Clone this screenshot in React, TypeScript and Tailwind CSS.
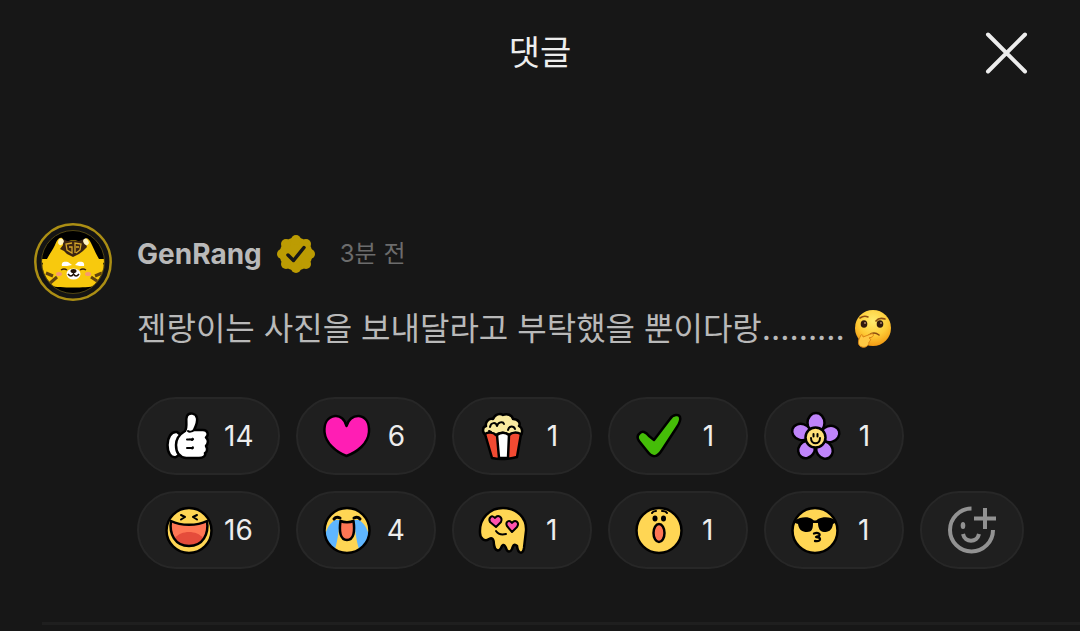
import { useState } from 'react';
import type { ReactNode } from 'react';

interface Reaction {
  id: string;
  label: string;
  count: number;
  icon: ReactNode;
}

const OUTLINE = {
  stroke: '#000',
  strokeWidth: 2.5,
  strokeLinecap: 'round' as const,
  strokeLinejoin: 'round' as const,
};

function Icon({ children }: { children: ReactNode }) {
  return (
    <svg className="w-12 h-12 shrink-0 overflow-visible" viewBox="0 0 48 48" fill="none" aria-hidden="true">
      {children}
    </svg>
  );
}

function ThumbIcon() {
  return (
    <Icon>
      <g fill="#fff" {...OUTLINE}>
        <path d="M13 20C7 19 3.500 26 3.500 33C3.500 41 7 46 12 45L18 41V24Z" />
        <path d="M21 19C24 14 21 8 23 4C25 0 32 1 33 6C34 10 32 14 30 18H39C44 18 45 23 42 25.500C45 28 44 32 42 34C44 37 43 40 41 41C42 44 39 46 35 46H22C14 45 12 39 12 33C12 26 16 22 21 19Z" />
      </g>
      <path d="M30 18C28 20 25 20 24 19M23 27.500H28M23 36H28" {...OUTLINE} strokeWidth={2} />
      <path d="M26 27C28 30 31 28 29 26M26 35.500C28 38.500 31 36.500 29 34.500" fill="#000" {...OUTLINE} strokeWidth={1} />
    </Icon>
  );
}

function HeartIcon() {
  return (
    <Icon>
      <path
        d="M23.500 14C22 7 17 3.500 12 4C4 5 1 12 1.500 20C2.500 31 13 40 23.500 44C34 40 45 32 46 20C46.500 11 43 5 36 4C30 3.500 25 8 23.500 14Z"
        fill="#ff1eb4"
        {...OUTLINE}
      />
    </Icon>
  );
}

function PopcornIcon() {
  return (
    <Icon>
      <path
        d="M7 23C3 21 3 15 7 14C6 10 10 6 14 7C16 2 21 1 24 3C28 1 33 3 34 7C39 7 42 11 40 14C44 16 44 22 41 24Z"
        fill="#f9eaa0"
        {...OUTLINE}
      />
      <path d="M11 15C12 10 17 10 18 14C19 10 24 9 25 12M29 18C30 13 35 14 36 17M10 19L12 20" {...OUTLINE} strokeWidth={2} />
      <path d="M6 22C9 20 14 20 17 23C20 20 27 20 30 23C33 20 38 20 42 22L38 45C31 47 20 48 13 46Z" fill="#f24a32" {...OUTLINE} />
      <path d="M18 23C22 20 26 20 30 23L29 46H20Z" fill="#fff" {...OUTLINE} />
    </Icon>
  );
}

function CheckIcon() {
  return (
    <Icon>
      <path
        d="M4 22C7 18 11 20 14 24L19 28L35 7C38 2 44 2 45 5C46 8 44 12 42 15L27 38C22 46 17 46 12 39L4 29C2 26 2 24 4 22Z"
        fill="#45bd08"
        {...OUTLINE}
      />
    </Icon>
  );
}

function FlowerIcon() {
  return (
    <Icon>
      <g fill="#bf84fa" {...OUTLINE}>
        <ellipse cx="25" cy="11" rx="8.500" ry="10" />
        <ellipse cx="39" cy="22" rx="9.500" ry="8" transform="rotate(-18 39 22)" />
        <ellipse cx="33.500" cy="38" rx="8" ry="9" transform="rotate(-35 33.500 38)" />
        <ellipse cx="15.500" cy="37.500" rx="8" ry="9" transform="rotate(35 15.500 37.500)" />
        <ellipse cx="10.500" cy="20" rx="9.500" ry="8" transform="rotate(18 10.500 20)" />
      </g>
      <circle cx="24.500" cy="25.500" r="10" fill="#ffe078" {...OUTLINE} />
      <path d="M20 26C20 33 29 33 29 26M22.500 22V24.500M26.500 22V24.500" {...OUTLINE} strokeWidth={2} />
    </Icon>
  );
}

function LaughIcon() {
  return (
    <Icon>
      <circle cx="25" cy="24.500" r="22.500" fill="#ffd654" {...OUTLINE} />
      <path d="M7 15C17 20 33 20 43 15C45 28 39 40 25 40C11 40 5 28 7 15Z" fill="#ff7654" />
      <path d="M11 32C17 24 33 24 39 32C33 42 17 42 11 32Z" fill="#e54c3b" />
      <path d="M7 15C17 20 33 20 43 15C45 28 39 40 25 40C11 40 5 28 7 15Z" {...OUTLINE} />
      <path d="M17 9L21 11L17 13.500M33 9L29 11L33 13.500" {...OUTLINE} strokeWidth={2} />
    </Icon>
  );
}

function CryIcon() {
  return (
    <Icon>
      <circle cx="24" cy="24.500" r="22.500" fill="#ffd654" />
      <path d="M12 14C7 17 4 22 2 29C4 36 8 41 12 43C15 34 16 22 17 14Z" fill="#5fb6ff" />
      <path d="M36 14C41 17 44 22 46 29C44 36 40 41 36 43C33 34 32 22 31 14Z" fill="#5fb6ff" />
      <circle cx="24" cy="24.500" r="22.500" {...OUTLINE} />
      <path d="M17.500 15C21 16.500 27 16.500 30.500 15C32 25 31 34 24 34C17 34 16 25 17.500 15Z" fill="#ff7654" {...OUTLINE} />
      <path d="M11 13C13 10.500 15 11 17 12M31 12C33 11 35 10.500 37 13" {...OUTLINE} strokeWidth={3} />
    </Icon>
  );
}

function MeltIcon() {
  return (
    <Icon>
      <path
        d="M1 27C0 12 11 2 24 2C38 2 48 12 47 25L45 42C44 49 39 48 38 40C35 37 34 40 33 43C31 47 28 46 27 42C25 37 23 39 22 42C20 46 16 45 15 39C15 34 14 31 10 33C6 36 1 33 1 27Z"
        fill="#ffd654"
        {...OUTLINE}
      />
      <g fill="#ff52ad" {...OUTLINE} strokeWidth={2}>
        <path d="M16 12C13 8 9 12 11 16L17 21L22 16C24 11 19 8 16 12Z" />
        <path d="M33 17C30 13 26 16 28 20L33 26L38 21C41 16 36 13 33 17Z" />
      </g>
      <path d="M17 25C19 28 23 29 27 28" {...OUTLINE} strokeWidth={2} />
    </Icon>
  );
}

function ShockIcon() {
  return (
    <Icon>
      <circle cx="24" cy="24.500" r="22.500" fill="#ffd654" {...OUTLINE} />
      <ellipse cx="24" cy="27" rx="5.500" ry="9" fill="#ff7654" {...OUTLINE} />
      <ellipse cx="20" cy="12.500" rx="2.500" ry="3" fill="#000" />
      <ellipse cx="28.500" cy="12.500" rx="2.500" ry="3" fill="#000" />
      <path d="M17 7C18 5 20 5 21 5M27 5C29 5 31 5 32 7" {...OUTLINE} strokeWidth={2} />
    </Icon>
  );
}

function CoolIcon() {
  return (
    <Icon>
      <circle cx="24" cy="24.500" r="22.500" fill="#ffd654" {...OUTLINE} />
      <path
        d="M4 14L9 12C13 11 18 11 21 13C23 15 25 15 27 13C31 11 36 11 40 12L44 14V17L42 18C41 25 37 26 33 26C29 26 27 22 27 17H22C22 23 21 26 16 26C11 26 8 24 7 18L4 17Z"
        fill="#000"
      />
      <path d="M23 27.500C27 26 30 28 28 30L25 31C31 31 30 36 24 35" {...OUTLINE} strokeWidth={2.300} />
    </Icon>
  );
}

function AddReactionIcon() {
  return (
    <Icon>
      <g stroke="#929292" strokeWidth="4">
        <path d="M23.500 2.500A21.500 21.500 0 1 0 45 24" />
        <path d="M15 28C17 37 29 37 31 28" />
        <path d="M37 2V23M26 12.500H48" />
      </g>
      <ellipse cx="15" cy="19.500" rx="2.300" ry="3.500" fill="#929292" />
    </Icon>
  );
}

function Avatar() {
  return (
    <svg className="w-[78px] h-[78px] shrink-0" viewBox="0 0 78 78" role="img" aria-label="GenRang">
      <defs>
        <clipPath id="avatar-clip">
          <circle cx="39" cy="39" r="31" />
        </clipPath>
      </defs>
      <circle cx="39" cy="39" r="37.700" fill="#141414" stroke="#ab8e14" strokeWidth="2.500" />
      <circle cx="39" cy="39" r="31.500" fill="#000" stroke="#514512" strokeWidth="1" />
      <g clipPath="url(#avatar-clip)">
        <path
          d="M28 15C25 14 23 17 21 22C18 28 15 32 13 36L6 36L9 41L5 44C7 54 11 60 17 63C26 65 52 65 61 63C67 60 71 54 73 44L69 41L72 36L65 36C62 31 60 26 57 20C54 14 51 14 49 19C42 17 36 17 31 19Z"
          fill="#f8c90d"
        />
        <path d="M29 16L33 18L45 18L50 16L53 24L49 28L45 31L39 34L33 31L30 28L26 26L29 22Z" fill="#3c2511" />
        <path d="M24 20C24 15 28 14 30 18C29 22 26 24 24 20ZM49 18C50 14 54 15 55 20C53 24 50 22 49 18Z" fill="#fff3c0" />
        <path d="M38 20L32 21L33 27L38 30V24H35M41 30V20L47 21L46 27L42 30M42 24H45" fill="none" stroke="#d3a429" strokeWidth="1.300" />
        <path d="M28 43C27 39 30 38 34 39L38 42C35 43 31 43 28 43ZM50 43C51 39 48 38 44 39L41 42C44 43 47 43 50 43Z" fill="#fff" />
        <path d="M27 47Q30 45 33 47M46 47Q49 45 52 47" fill="none" stroke="#3a240c" strokeWidth="1.500" />
        <ellipse cx="39.500" cy="51" rx="7" ry="5.500" fill="#fff" />
        <ellipse cx="39.500" cy="48" rx="3" ry="2" fill="#241509" />
        <path d="M34 51Q37 55 39.500 51Q42 55 45 51" fill="none" stroke="#241509" strokeWidth="1.500" />
        <ellipse cx="25" cy="51" rx="3" ry="2" fill="#f79a6e" />
        <ellipse cx="54" cy="51" rx="3" ry="2" fill="#f79a6e" />
        <path d="M12 50L19 53M15 61L23 54M68 50L61 53M66 60L57 54" stroke="#60430f" strokeWidth="3" />
      </g>
    </svg>
  );
}

function VerifiedBadge() {
  return (
    <svg className="w-10 h-10 shrink-0" viewBox="0 0 40 40" role="img" aria-label="인증됨">
      <g fill="#bc9c03">
        <circle cx="20" cy="20" r="16.500" />
        <circle cx="20" cy="6" r="5" />
        <circle cx="30" cy="10" r="5" />
        <circle cx="34" cy="20" r="5" />
        <circle cx="30" cy="30" r="5" />
        <circle cx="20" cy="34" r="5" />
        <circle cx="10" cy="30" r="5" />
        <circle cx="6" cy="20" r="5" />
        <circle cx="10" cy="10" r="5" />
      </g>
      <path d="M12 21L17.500 26.500L28 13.500" fill="none" stroke="#171717" strokeWidth="3.500" strokeLinecap="round" strokeLinejoin="round" />
    </svg>
  );
}

function ThinkingEmoji() {
  return (
    <svg className="w-10 h-10 shrink-0" viewBox="0 0 40 40" role="img" aria-label="생각하는 얼굴">
      <defs>
        <radialGradient id="face" cx="50%" cy="30%" r="70%">
          <stop offset="0" stopColor="#ffec70" />
          <stop offset="0.600" stopColor="#fecb36" />
          <stop offset="1" stopColor="#f39a13" />
        </radialGradient>
      </defs>
      <circle cx="20" cy="19" r="18" fill="url(#face)" />
      <ellipse cx="11" cy="15" rx="3.300" ry="3.800" fill="#30190e" />
      <ellipse cx="27" cy="15" rx="3.300" ry="3.800" fill="#30190e" />
      <circle cx="12" cy="14" r="0.900" fill="#bb8c70" />
      <circle cx="28" cy="14" r="0.900" fill="#bb8c70" />
      <path d="M7 9Q11 6 15 8M23 12Q26 8 32 10M16 26Q21 22 26 26" fill="none" stroke="#8a4c12" strokeWidth="1.600" strokeLinecap="round" />
      <path
        d="M8 26C9 25 10 26 10 28L18 25C21 24 21 27 19 28L16 29C19 30 17 32 16 33C16 37 12 39 9 38C5 37 5 33 6 30Z"
        fill="#ffc944"
        stroke="#dc8414"
        strokeWidth="1"
      />
    </svg>
  );
}

const REACTIONS: Reaction[] = [
  { id: 'thumb', label: '좋아요', count: 14, icon: <ThumbIcon /> },
  { id: 'heart', label: '하트', count: 6, icon: <HeartIcon /> },
  { id: 'popcorn', label: '팝콘', count: 1, icon: <PopcornIcon /> },
  { id: 'check', label: '체크', count: 1, icon: <CheckIcon /> },
  { id: 'flower', label: '꽃', count: 1, icon: <FlowerIcon /> },
  { id: 'laugh', label: '웃음', count: 16, icon: <LaughIcon /> },
  { id: 'cry', label: '눈물', count: 4, icon: <CryIcon /> },
  { id: 'melt', label: '심쿵', count: 1, icon: <MeltIcon /> },
  { id: 'shock', label: '놀람', count: 1, icon: <ShockIcon /> },
  { id: 'cool', label: '선글라스', count: 1, icon: <CoolIcon /> },
];

export default function App() {
  const [picked, setPicked] = useState<string[]>([]);

  const toggle = (id: string) => {
    setPicked((prev) => (prev.includes(id) ? prev.filter((p) => p !== id) : [...prev, id]));
  };

  return (
    <main className="min-h-screen bg-[#171717] font-['Inter','Noto_Sans_CJK_KR',sans-serif]">
      {/* 헤더 */}
      <header className="grid grid-cols-[1fr_auto_1fr] items-center px-12 h-[105px]">
        <h1 className="col-start-2 text-[34px] leading-10 text-[#ededed]">댓글</h1>
        <button type="button" aria-label="닫기" className="justify-self-end flex items-center justify-center w-[52px] h-[52px]">
          <svg className="w-11 h-11" viewBox="0 0 44 44" fill="none" stroke="#ededed" strokeWidth="4" strokeLinecap="round">
            <path d="M4 3.500L41 40.500M41 3.500L4 40.500" />
          </svg>
        </button>
      </header>

      {/* 댓글 */}
      <article className="flex gap-[25px] px-[34px] pt-[118px]">
        <Avatar />
        <div className="min-w-0 flex-1">
          <div className="flex items-center h-[62px]">
            <span className="text-[28px] font-bold text-[#b9b9b9]">GenRang</span>
            <span className="ml-3.5">
              <VerifiedBadge />
            </span>
            <time className="ml-6 text-2xl text-[#6c6c6c]">3분 전</time>
          </div>
          <p className="flex items-center mt-5 gap-2 h-12 text-[32px] text-[#b9b9b9]">
            젠랑이는 사진을 보내달라고 부탁했을 뿐이다랑.........
            <ThinkingEmoji />
          </p>

          {/* 반응 */}
          <div className="flex flex-wrap gap-4 mt-11">
            {REACTIONS.map((reaction) => (
              <button
                key={reaction.id}
                type="button"
                aria-label={`${reaction.label} ${reaction.count}`}
                aria-pressed={picked.includes(reaction.id)}
                onClick={() => toggle(reaction.id)}
                className="flex items-center gap-3 h-[78px] px-[25px] rounded-full border-2 border-[#272727] bg-[#1f1f1f]"
              >
                {reaction.icon}
                <span className="min-w-[26px] text-center text-[28px] text-[#ededed]">{reaction.count}</span>
              </button>
            ))}
            <button
              type="button"
              aria-label="반응 추가"
              className="flex items-center justify-center h-[78px] px-[26px] rounded-full border-2 border-[#272727] bg-[#1f1f1f]"
            >
              <AddReactionIcon />
            </button>
          </div>
        </div>
      </article>

      <hr className="mt-[53px] ml-[42px] border-t-[3px] border-[#1f1f1f]" />
    </main>
  );
}
